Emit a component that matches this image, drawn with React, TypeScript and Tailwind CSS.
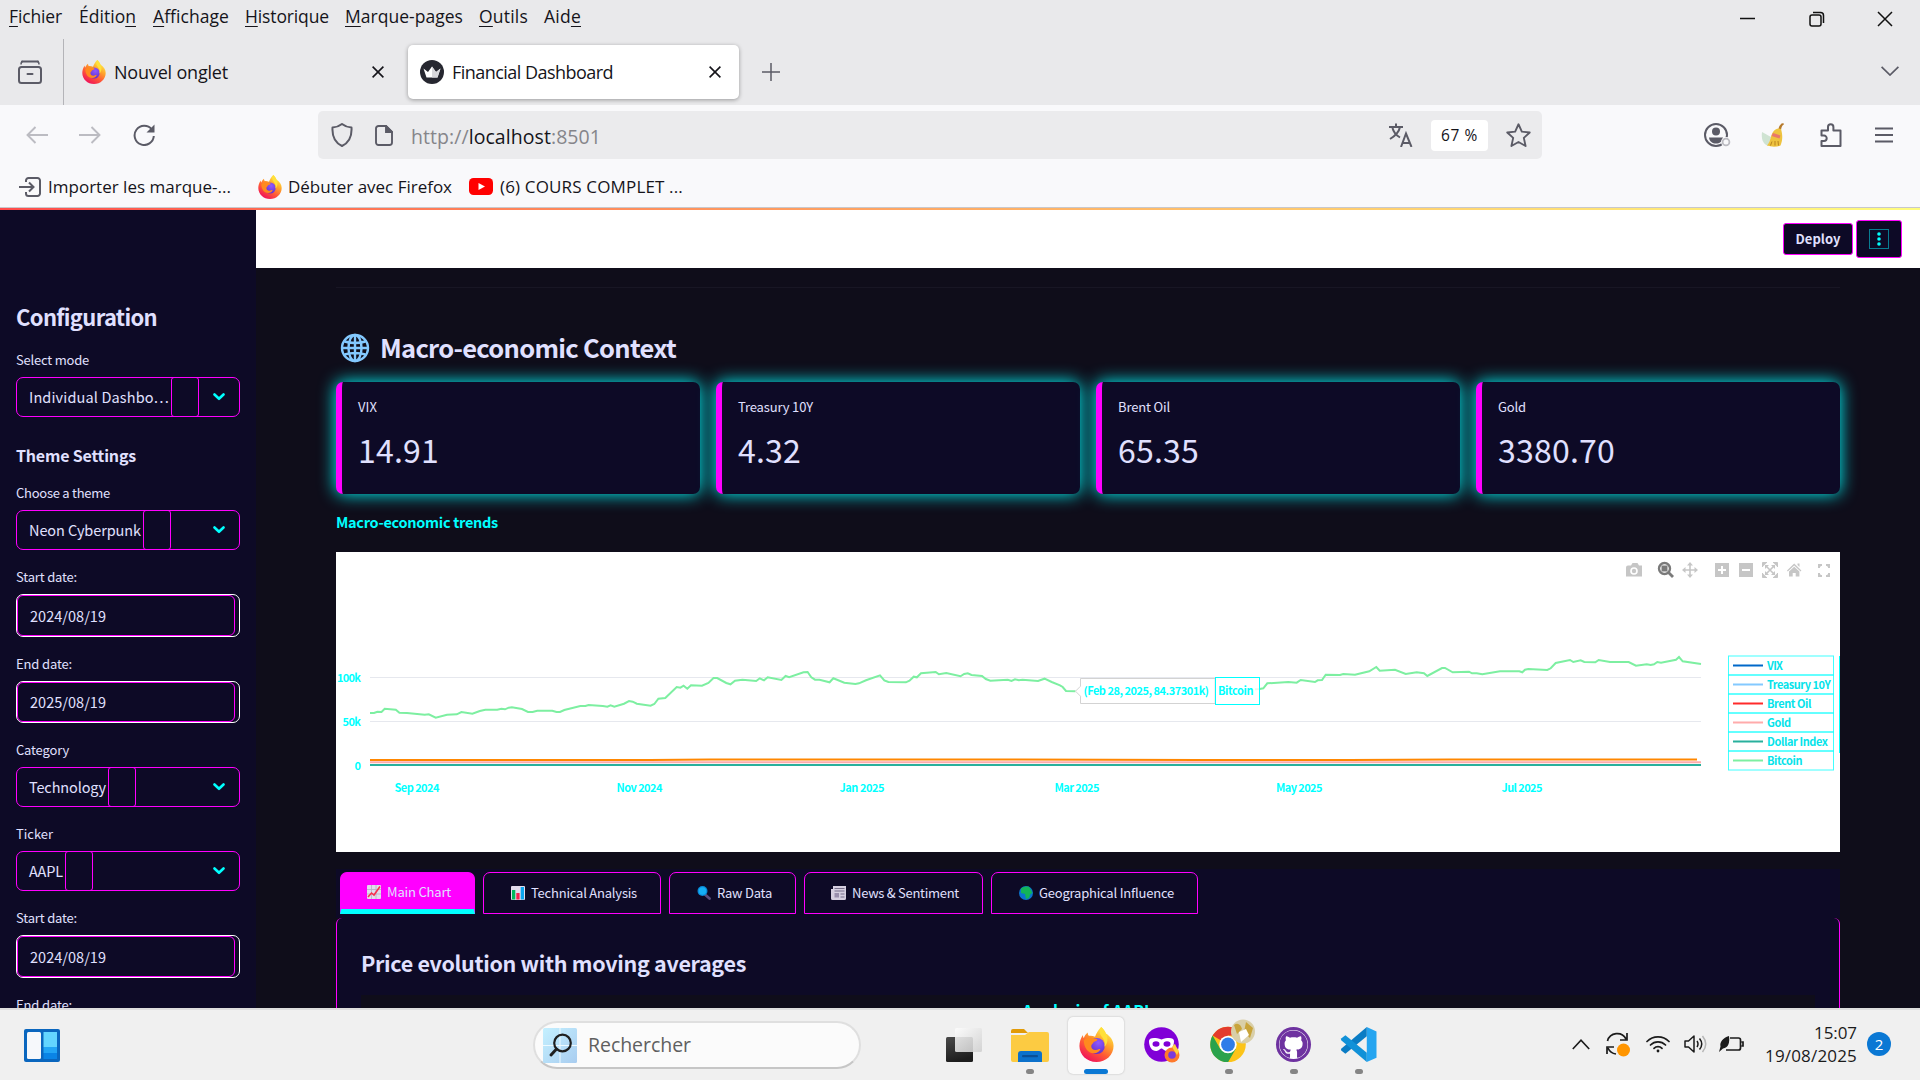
import { useLayoutEffect, useRef, type ReactNode } from "react";
import { FaGithub } from "react-icons/fa";

/* Text whose tracking is adjusted so it fills the width of its box. */
function T({ c = "", children }: { c?: string; children: ReactNode }) {
  const box = useRef<HTMLDivElement>(null);
  const run = useRef<HTMLSpanElement>(null);
  useLayoutEffect(() => {
    if (!box.current || !run.current) return;
    run.current.style.letterSpacing = "0px";
    const n = (run.current.textContent || "").length || 1;
    const d = box.current.getBoundingClientRect().width - run.current.getBoundingClientRect().width;
    run.current.style.letterSpacing = `${(d / n).toFixed(3)}px`;
  }, []);
  return (
    <div ref={box} className={`shrink-0 whitespace-nowrap ${c}`}>
      <span ref={run} className="inline-block">{children}</span>
    </div>
  );
}

function Firefox({ c }: { c: string }) {
  return (
    <svg viewBox="0 0 24 24" className={`shrink-0 ${c}`}>
      <defs>
        <linearGradient id="fx1" x1="0.8" y1="0.05" x2="0.25" y2="0.95">
          <stop offset="0" stopColor="#fff44f" />
          <stop offset="0.35" stopColor="#ffa62b" />
          <stop offset="0.65" stopColor="#ff5a36" />
          <stop offset="1" stopColor="#f0145a" />
        </linearGradient>
        <radialGradient id="fx2" cx="0.6" cy="0.3" r="0.8">
          <stop offset="0" stopColor="#9059ff" />
          <stop offset="1" stopColor="#5b2bc4" />
        </radialGradient>
      </defs>
      <path d="M15.2 0c1.6 1.4 2.7 2.900 3.200 4.400 3.200 1.900 5.300 5 5.300 8.600C23.700 19.200 18.500 24 12 24S.3 19.200.3 13c0-2.900 1-5.500 2.300-7.600.1 1 .3 1.600.7 2.200.5-1.600 1.400-2.800 2.700-3.800 0 1 .2 1.700.7 2.200 1.600-.2 3 0 4.300.7.900-2.300 2.200-4.600 4.200-6.700z" fill="url(#fx1)" />
      <circle cx="12.200" cy="13" r="5.500" fill="url(#fx2)" />
      <path d="M3.300 9.200c2.200-2 4.700-2.500 7-1.400l2.200.4c.3.900-.6 1.500-2.400 2-.5 1.300-1.700 1.500-1.700 3 0 1.700 1.500 2.700 3.300 2.500 1.300-.2 2-.9 3-.6-.6 1.900-2.500 3-4.700 2.900-3.800-.1-6.700-4-6.700-8.800z" fill="#ff8a1e" />
      <path d="M15.200 0c-1.700 2.900-1 5 .8 7.200 1.500 1.900 2 4 1.400 6.300 2.500-2.300 2.800-6.200 1-9.100C17.900 2.900 16.800 1.400 15.200 0z" fill="#ffe03a" />
    </svg>
  );
}

const menus: [string, string, string, string][] = [
  ["", "F", "ichier", "ml-[8px] w-[53px]"],
  ["Éditio", "n", "", "ml-[17px] w-[57px]"],
  ["", "A", "ffichage", "ml-[17px] w-[76px]"],
  ["", "H", "istorique", "ml-[16px] w-[84px]"],
  ["", "M", "arque-pages", "ml-[16px] w-[118px]"],
  ["", "O", "utils", "ml-[16px] w-[49px]"],
  ["Aid", "e", "", "ml-[16px] w-[37px]"],
];

function Cross({ c }: { c: string }) {
  return (
    <svg viewBox="0 0 12 12" className={`shrink-0 stroke-[#15141a] ${c}`} fill="none" strokeWidth="1.600">
      <path d="M.6.6l10.800 10.800M11.400.6L.6 11.400" />
    </svg>
  );
}

function Chrome() {
  return (
    <div className="font-['Open_Sans','Noto_Sans',sans-serif] text-[#15141a]">
      <div className="flex h-[33px] items-start bg-[#e9e9eb] pl-px text-[17.500px]">
        {menus.map(([a, u, b, c]) => (
          <T key={a + u} c={`h-[33px] leading-[32px] ${c}`}>
            {a}<span className="underline decoration-1 underline-offset-[3px]">{u}</span>{b}
          </T>
        ))}
        <div className="ml-auto flex h-[33px] items-center pt-[5px]">
          <svg viewBox="0 0 16 16" className="size-[16px]" stroke="#111" strokeWidth="1.500"><path d="M0 7.500h15" /></svg>
          <svg viewBox="0 0 16 16" className="ml-[53px] size-[16px]" fill="none" stroke="#111" strokeWidth="1.500">
            <rect x="1" y="4" width="11" height="11" rx="2" /><path d="M4 1.500h7.500a3 3 0 0 1 3 3V12" />
          </svg>
          <svg viewBox="0 0 16 16" className="mr-[27px] ml-[52px] size-[16px]" stroke="#111" strokeWidth="1.500"><path d="M1 1l14 14M15 1L1 15" /></svg>
        </div>
      </div>
      <div className="flex h-[72px] items-center bg-[#e9e9eb] pt-[6px] text-[18px]">
        <svg viewBox="0 0 24 24" className="ml-[18px] h-[24px] w-[24px]" fill="none" stroke="#5b5b66" strokeWidth="2">
          <path d="M4 1.500h16M9.500 14h5" strokeLinecap="round" /><path d="M3 4.500c0-2 .500-3 2-3M21 4.500c0-2-.500-3-2-3" strokeWidth="1.500" />
          <rect x="1" y="7" width="22" height="16" rx="2.500" />
        </svg>
        <div className="ml-[21px] h-[66px] w-px self-end bg-[#b4b4b8]" />
        <Firefox c="ml-[18px] size-[24px]" />
        <T c="ml-[8px] w-[114px] leading-[30px]">Nouvel onglet</T>
        <Cross c="ml-[144px] size-[12px]" />
        <div className="ml-[24px] flex h-[54px] w-[331px] items-center rounded-[5px] bg-white shadow-[0_1px_4px_rgba(0,0,0,0.35)]">
          <svg viewBox="0 0 24 24" className="ml-[12px] size-[24px]">
            <circle cx="12" cy="12" r="12" fill="#262730" />
            <path d="M3.500 8.500l4.500 3.500 4-5.500 4 5.500 4.500-3.500-3 9h-11z" fill="#fff" />
            <path d="M12 6.500l4 5.500 4.500-3.500-3 9H12z" fill="#d8d8dc" />
          </svg>
          <T c="ml-[8px] w-[161px] leading-[30px]">Financial Dashboard</T>
          <Cross c="ml-[96px] size-[12px]" />
        </div>
        <svg viewBox="0 0 18 18" className="ml-[23px] size-[18px]" stroke="#5b5b66" strokeWidth="1.500"><path d="M9 0v18M0 9h18" /></svg>
        <svg viewBox="0 0 18 10" className="mr-[21px] mb-[3px] ml-auto h-[10px] w-[18px]" fill="none" stroke="#5b5b66" strokeWidth="1.700"><path d="M.6.8L9 9 17.400.8" /></svg>
      </div>
      <div className="flex h-[60px] items-center bg-[#f9f9fb]">
        <svg viewBox="0 0 22 18" className="ml-[26px] h-[18px] w-[22px]" fill="none" stroke="#bcbcc2" strokeWidth="1.900"><path d="M22 9H1.500M9.500 1l-8 8 8 8" /></svg>
        <svg viewBox="0 0 22 18" className="ml-[31px] h-[18px] w-[22px]" fill="none" stroke="#bcbcc2" strokeWidth="1.900"><path d="M0 9h20.500M12.500 1l8 8-8 8" /></svg>
        <svg viewBox="0 0 22 22" className="ml-[32px] size-[22px]" fill="none" stroke="#5b5b66" strokeWidth="2"><path d="M18.800 5.500A9.600 9.600 0 1 0 20.800 12" /><path d="M21.500.5V8.500H13.500z" fill="#5b5b66" stroke="none" /></svg>
        <div className="ml-[163px] flex h-[48px] w-[1224px] items-center rounded-[5px] bg-[#ebebed]">
          <svg viewBox="0 0 22 24" className="ml-[13px] h-[24px] w-[22px]" fill="none" stroke="#5b5b66" strokeWidth="2" strokeLinejoin="round"><path d="M11 1c2.500 2 5.500 3.200 9.500 3.600C21 13 18.500 19.500 11 23 3.500 19.500 1 13 1.500 4.600 5.500 4.200 8.500 3 11 1z" /></svg>
          <svg viewBox="0 0 18 21" className="ml-[22px] h-[21px] w-[18px]" fill="none" stroke="#5b5b66" strokeWidth="1.900"><path d="M11 1H3.500A2.500 2.500 0 0 0 1 3.500v14A2.500 2.500 0 0 0 3.500 20h11a2.500 2.500 0 0 0 2.500-2.500V7z" /><path d="M11 1v6h6z" fill="#5b5b66" /></svg>
          <T c="mt-[3px] ml-[18px] w-[190px] text-[19.500px] leading-[30px] text-[#85858a]">http://<span className="text-[#15141a]">localhost</span>:8501</T>
          <svg viewBox="0 0 24 24" className="ml-auto h-[24px] w-[24px]" fill="none" stroke="#5b5b66" strokeWidth="2">
            <path d="M0 4h14M7 .5V4M11 4C10 9 6 13 1 16M3.500 5c1 4 4 7.500 7.500 9.500M12 24l5-13.500 5.500 13.500M13.500 20h7" />
          </svg>
          <div className="ml-[18px] flex h-[31px] w-[57px] items-center justify-center rounded-[4px] bg-white">
            <T c="w-[37px] text-[15.500px] leading-[30px]">67 %</T>
          </div>
          <svg viewBox="0 0 24 24" className="mr-[11px] ml-[18px] size-[25px]" fill="none" stroke="#5b5b66" strokeWidth="1.800" strokeLinejoin="round"><path d="M12 1.200l3.200 7.100 7.600.8-5.700 5.200 1.700 7.800L12 18.200 5.200 22.100l1.700-7.800L1.200 9.100l7.600-.8z" /></svg>
        </div>
        <svg viewBox="0 0 28 26" className="ml-[161px] h-[26px] w-[28px]">
          <circle cx="13" cy="13" r="11" fill="none" stroke="#5b5b66" strokeWidth="2" />
          <circle cx="13" cy="9.500" r="4" fill="#5b5b66" /><path d="M6 15.500h14c-.500 4-3.500 6-7 6s-6.500-2-7-6z" fill="#5b5b66" />
          <circle cx="23" cy="20" r="5" fill="#f9f9fb" /><circle cx="23" cy="20" r="3.400" fill="#f9f9fb" stroke="#bcbcc2" strokeWidth="1.800" />
        </svg>
        <svg viewBox="0 0 24 24" className="ml-[30px] size-[24px]">
          <path d="M1 9c-1 7 1 12 6 14l3-9z" fill="#cfe3d2" />
          <path d="M20.500.5q2.500-1 2.500.8c-2 1.200-2.500 3-3 5.700l-2.500-1q.5-3.500 3-5.500z" fill="#b67a2c" />
          <path d="M12 9c2-3 5-4.500 8-3 1.500 5 2 11-.5 16.500-4 1.500-9 1.500-13.500 0C9.500 19 9.500 13 12 9z" fill="#eec33f" />
          <path d="M12 10l7.500 2.500-1 3-8-2.500z" fill="#e9786b" />
          <path d="M9.500 22.500l1.500-4M14 22.500V18M17.500 22.500L17 18" stroke="#b98320" />
        </svg>
        <svg viewBox="0 0 22 24" className="ml-[35px] h-[24px] w-[22px]" fill="none" stroke="#5b5b66" strokeWidth="2" strokeLinejoin="round"><path d="M1.500 7.500H8V4a2.700 2.700 0 0 1 5.400 0v3.500H20.500V23H1.500v-5H4a2.700 2.700 0 0 0 0-5.400H1.500z" /></svg>
        <svg viewBox="0 0 18 16" className="ml-[33px] h-[16px] w-[18px]" stroke="#5b5b66" strokeWidth="2"><path d="M0 1.500h18M0 8h18M0 14.500h18" /></svg>
      </div>
      <div className="flex h-[42px] items-center bg-[#f9f9fb] pt-px text-[17px] leading-[30px]">
        <svg viewBox="0 0 22 20" className="ml-[19px] h-[20px] w-[22px]" fill="none" stroke="#5b5b66" strokeWidth="2"><path d="M7 5V3.500A2.500 2.500 0 0 1 9.500 1h9A2.500 2.500 0 0 1 21 3.500v13a2.500 2.500 0 0 1-2.500 2.500h-9A2.500 2.500 0 0 1 7 16.500V15M0 10h14M10 5.500l4.500 4.500-4.500 4.500" /></svg>
        <T c="ml-[7px] w-[183px]">Importer les marque-...</T>
        <Firefox c="ml-[27px] size-[24px]" />
        <T c="ml-[6px] w-[164px]">Débuter avec Firefox</T>
        <svg viewBox="0 0 24 17" className="ml-[17px] h-[17px] w-[24px]"><rect width="24" height="17" rx="4.500" fill="#f00" /><path d="M9.500 5v7l6.500-3.500z" fill="#fff" /></svg>
        <T c="ml-[7px] w-[183px]">(6) COURS COMPLET ...</T>
      </div>
      <div className="h-px bg-[#c8c8cc]" />
      <div className="h-[2px] bg-linear-to-r from-[#ff4b4b] to-[#fffd80]" />
    </div>
  );
}

function Label({ c, children }: { c: string; children: ReactNode }) {
  return <T c={`h-[20px] pt-px text-[13px] leading-[20px] ${c}`}>{children}</T>;
}

function Select({ c, children }: { c: string; children: ReactNode }) {
  return (
    <div className="mt-[8px] flex h-[40px] w-[224px] items-center rounded-[7px] border border-[#ff00ff] pl-[12px]">
      <T c={`text-[14.500px] leading-[38px] ${c}`}>{children}</T>
      <div className="ml-[2px] h-[40px] w-[28px] shrink-0 rounded-[3px] border border-[#ff00ff]" />
      <svg viewBox="0 0 12 8" className="mr-[14px] ml-auto h-[8px] w-[12px] shrink-0" fill="none" stroke="#0ff" strokeWidth="2.600" strokeLinecap="round" strokeLinejoin="round"><path d="M1.500 1.500L6 5.800l4.500-4.300" /></svg>
    </div>
  );
}

function DateBox({ h, children }: { h: string; children: ReactNode }) {
  return (
    <div className={`mt-[8px] w-[224px] rounded-[7px] border border-white pr-[4px] ${h}`}>
      <div className="flex h-full items-center rounded-[6px] border border-[#ff00ff] pl-[12px]">
        <T c="w-[76px] text-[14.500px] leading-[38px]">{children}</T>
      </div>
    </div>
  );
}

function Sidebar() {
  return (
    <aside className="h-[798px] w-[256px] shrink-0 overflow-hidden bg-[#0d0a26] pt-[91px] pl-[16px]">
      <T c="w-[141px] text-[22px] leading-[30px] font-semibold">Configuration</T>
      <Label c="mt-[18px] w-[73px]">Select mode</Label>
      <Select c="w-[140px]">Individual Dashbo…</Select>
      <T c="mt-[28px] w-[120px] text-[16px] leading-[20px] font-semibold">Theme Settings</T>
      <Label c="mt-[17px] w-[94px]">Choose a theme</Label>
      <Select c="w-[112px]">Neon Cyberpunk</Select>
      <Label c="mt-[16px] w-[61px]">Start date:</Label>
      <DateBox h="h-[43px]">2024/08/19</DateBox>
      <Label c="mt-[16px] w-[56px]">End date:</Label>
      <DateBox h="h-[42px]">2025/08/19</DateBox>
      <Label c="mt-[16px] w-[53px]">Category</Label>
      <Select c="w-[77px]">Technology</Select>
      <Label c="mt-[16px] w-[37px]">Ticker</Label>
      <Select c="w-[34px]">AAPL</Select>
      <Label c="mt-[16px] w-[61px]">Start date:</Label>
      <DateBox h="h-[43px]">2024/08/19</DateBox>
      <Label c="mt-[16px] w-[56px]">End date:</Label>
    </aside>
  );
}

const cards: [string, string, string, string][] = [
  ["VIX", "14.91", "w-[19px]", "w-[81px]"],
  ["Treasury 10Y", "4.32", "w-[75px]", "w-[63px]"],
  ["Brent Oil", "65.35", "w-[52px]", "w-[81px]"],
  ["Gold", "3380.70", "w-[28px]", "w-[117px]"],
];

const btcA = "370,713 374,713 377.4,711.7 381.5,712 384.7,708.7 395.8,709.7 399.4,712.7 407,712.9 424.7,714.7 428.8,714.3 435.7,717.7 447,714.7 456.8,714.3 461.4,712 472.4,713.7 479.8,711 485.3,709.7 497.2,709.7 501.4,708.7 505,709.3 508.7,707.7 511.9,707.3 522,709 528,712 532.6,712 537.2,710.7 552.3,710.7 556.5,712 560,712 564.3,710 580.3,706 585.4,706 588.6,705 602.8,706 607.4,706.7 610.6,705.3 614.3,706.7 624,703.7 629,701 632.7,701.7 636.8,703.7 650.6,705.7 654.3,704 658.4,698.7 665.3,698 676.7,687 680.4,687.7 683.6,685.7 687.3,688.7 691,685.3 702,685.7 708.4,683 713.5,678 717.2,678 726.3,683 730.5,684.3 735,680.7 742.4,679.7 756.2,681 759.8,678.3 764,680.3 767.7,677.3 781.4,680 785.6,676 789.2,677.3 803.5,672.3 807.6,672 811.3,677.3 815,679.7 819.5,679.7 829.6,682.3 833.3,678.3 844.3,682.7 855.4,684 859,683.3 866,680.3 880,675.3 884.3,680.3 888.4,682 905.9,682.3 909.5,680.7 913.7,676.7 916.9,677.3 921,673.3 935.7,672 938.9,674.3 946.3,673 960.5,676.3 964.2,674 967.8,673.3 971.5,675 982,676 985.8,679 990.3,680.7 1007.8,679.7 1011.5,681 1015,679.3 1018.8,680.3 1022.5,679.7 1038,681 1044.5,678.7 1051.7,682 1060,685.3 1062.7,687 1066,691 1075.5,691.3";
const btcB = "1255,689.3 1259.7,689 1263.3,688.3 1267.3,683.3 1288.3,682 1296.7,682.7 1300.7,680 1315,682 1317.7,680.3 1322,680 1325.7,674.7 1340,675 1343.3,674 1355,674.7 1369.3,671.3 1376.3,667 1379.7,670.7 1395,669.7 1405.7,674 1416.7,672.3 1424,673.3 1427.3,676 1442,668 1445,668 1452.7,672.3 1469,671.7 1472,673.3 1476.7,673.3 1482.3,674.3 1500,671.3 1519.3,671.3 1522.3,672.3 1525,669.7 1528.3,669 1547.3,670 1550.7,668.3 1555.7,663 1570,660 1573.3,662 1580.7,660.3 1584.3,662 1595.3,662.3 1598.7,660 1610,662 1628.7,662 1636,665.7 1646.7,664.3 1650.7,665 1654,664.3 1657.3,662 1661,662.7 1676,659.7 1679,657 1682.7,661.3 1701,664";

const months: [number, number, string][] = [
  [394.500, 45, "Sep 2024"], [616.500, 46, "Nov 2024"], [839.500, 45, "Jan 2025"],
  [1054.500, 45, "Mar 2025"], [1276, 46.500, "May 2025"], [1501.500, 41, "Jul 2025"],
];
const legend: [string, string, number][] = [
  ["VIX", "#0068c9", 16], ["Treasury 10Y", "#83c9ff", 64], ["Brent Oil", "#ff2b2b", 44.500],
  ["Gold", "#ffabab", 24], ["Dollar Index", "#29b09d", 61], ["Bitcoin", "#7defa1", 35.500],
];

function TrendChart() {
  return (
    <svg viewBox="336 552 1504 300" className="mt-[19px] h-[300px] w-[1504px] bg-white text-[11px] font-semibold" fill="none">
      <path d="M370 677.500h1331M370 721.500h1331" stroke="#e6e8ee" />
      <path d="M370 762.300h1331" stroke="#ffabab" strokeWidth="2" />
      <path d="M370 760h280l60-.5h300l190 .6h150l100-.7h247" stroke="#ff8700" strokeWidth="2" />
      <path d="M370 765h1331" stroke="#29b09d" strokeWidth="2" />
      <polyline points={btcA} stroke="#7defa1" strokeWidth="2" />
      <polyline points={btcB} stroke="#7defa1" strokeWidth="2" />
      <g fill="#0ff">
        <text x="337" y="682" textLength="24">100k</text>
        <text x="342.500" y="726" textLength="18.500">50k</text>
        <text x="354.500" y="769.500">0</text>
        {months.map(([x, w, t]) => <text key={t} x={x} y="792" textLength={w}>{t}</text>)}
      </g>
      <path d="M1075.500 691.200l5-5V678.500h134.700v25h-134.700v-7.300z" fill="#fff" stroke="#d3d3d3" />
      <rect x="1215.500" y="677.500" width="44" height="27" stroke="#0ff" fill="#fff" fillOpacity="0.8" />
      <text x="1083.500" y="695" textLength="125.500" fill="#0ff">(Feb 28, 2025, 84.37301k)</text>
      <text x="1218" y="695" textLength="35.500" fill="#0ff">Bitcoin</text>
      {legend.map(([t, col, w], i) => (
        <g key={t}>
          <rect x="1728.500" y={656 + i * 19} width="105" height="19" stroke="#0ff" strokeOpacity="0.75" />
          <path d={`M1733 ${665.5 + i * 19}h30`} stroke={col} strokeWidth="2" />
          <text x="1767" y={670 + i * 19} textLength={w} fill="#06e3ea">{t}</text>
        </g>
      ))}
      <path d="M1839.500 656v97" stroke="#0ff" />
      <g fill="#c6c6c6">
        <path d="M1628 565.500h3l1.500-2.500h5l1.500 2.500h3v11h-16v-9q0-2 2-2z" />
        <circle cx="1634" cy="571" r="3.800" fill="#fff" /><circle cx="1634" cy="571" r="2.200" />
        <circle cx="1664.500" cy="568.500" r="5.500" fill="#fff" stroke="#7a7a7a" strokeWidth="2.400" />
        <path d="M1668.500 572.500l4.500 4.500" stroke="#7a7a7a" strokeWidth="2.800" /><rect x="1662" y="566" width="5" height="5" fill="#7a7a7a" stroke="#7a7a7a" strokeWidth="1" />
        <path d="M1690 564v12M1684 570h12" stroke="#c6c6c6" strokeWidth="1.600" />
        <path d="M1690 562l3 3.500h-6zM1690 578l3-3.500h-6zM1682 570l3.500-3v6zM1698 570l-3.500-3v6z" />
        <path d="M1715 563h14v14h-14zM1739 563h14v14h-14z" />
        <path d="M1722 566v8M1718 570h8M1742 570h8" stroke="#fff" strokeWidth="2" />
        <path d="M1762.500 567v-4.500h4.500M1773 562.500h4.500v4.500M1777.500 573v4.500h-4.500M1767 577.500h-4.500v-4.500" stroke="#c6c6c6" />
        <path d="M1766.500 566.500l7 7M1773.500 566.500l-7 7" stroke="#c6c6c6" strokeWidth="1.600" />
        <path d="M1765 565h4l-4 4zM1775 565v4l-4-4zM1775 575h-4l4-4zM1765 575v-4l4 4z" />
        <path d="M1787 570.500l7.200-7 7.200 7-.8.900-6.400-6-6.400 6zM1789 571.500l5.200-4.800 5.200 4.800v5h-3.700v-3.500h-3v3.500h-3.700zM1797.500 563.500h2v3.500l-2-2z" />
        <path d="M1819 568v-3h3M1826 565h3v3M1829 573v3h-3M1822 576h-3v-3" stroke="#c6c6c6" strokeWidth="2" />
      </g>
    </svg>
  );
}

const tabIcons: ReactNode[] = [
  <svg viewBox="0 0 14 14" className="size-[14px]"><rect width="14" height="14" rx="1" fill="#e2dcec" /><path d="M4.500 0v14M9 0v14M0 4.500h14M0 9h14" stroke="#b5aec4" strokeWidth=".8" /><path d="M1 12l3.500-4 2.500 2 6-8.500" stroke="#f8314f" strokeWidth="1.600" fill="none" /></svg>,
  <svg viewBox="0 0 14 14" className="size-[14px]"><rect width="14" height="14" rx="1" fill="#e2dcec" /><rect x="1" y="4" width="3.300" height="9.500" fill="#00b85c" /><rect x="5.300" y="7" width="3.300" height="6.500" fill="#f8214f" /><rect x="9.700" y="1" width="3.300" height="12.500" fill="#0aa5ee" /></svg>,
  <svg viewBox="0 0 14 14" className="size-[14px]"><path d="M8 8.500l4.500 4" stroke="#5a4d7c" strokeWidth="2.800" strokeLinecap="round" /><circle cx="5.500" cy="5" r="5" fill="#0a8ad8" /><circle cx="5.500" cy="5" r="3.700" fill="#15aef5" /></svg>,
  <svg viewBox="0 0 15 14" className="h-[14px] w-[15px]"><path d="M2 0h13v12.500q0 1.500-1.500 1.500H1.500Q0 14 0 12.500V3h2z" fill="#d5cfe0" /><path d="M3.500 2.500h10M3.500 5h10M9.500 8h4M9.500 11h4" stroke="#766f8a" strokeWidth="1.200" /><rect x="3.500" y="7" width="4.500" height="4.500" fill="#998fad" /></svg>,
  <svg viewBox="0 0 14 14" className="size-[14px]"><circle cx="7" cy="7" r="7" fill="#0a74cf" /><path d="M2 2.500C4 .5 8 0 10 .8L12 4l1.500 3-2 1L10 12l-3 1-1-5-4-1z" fill="#12b45a" /></svg>,
];
const tabs: [string, string, string, string][] = [
  ["Main Chart", "w-[135px]", "pl-[26px]", "w-[64px]"],
  ["Technical Analysis", "w-[178px]", "pl-[27px]", "w-[106px]"],
  ["Raw Data", "w-[127px]", "pl-[27px]", "w-[55px]"],
  ["News & Sentiment", "w-[179px]", "pl-[26px]", "w-[107px]"],
  ["Geographical Influence", "w-[207px]", "pl-[27px]", "w-[135px]"],
];

function Main() {
  return (
    <main className="h-[798px] grow overflow-hidden bg-[#0f0d1a]">
      <header className="flex h-[58px] items-center justify-end bg-white pr-[18px] pb-px">
        <div className="flex h-[32px] w-[70px] items-center justify-center rounded-[3px] border border-[#ff00ff] bg-[#0d0a26]">
          <T c="w-[45px] text-[13px] leading-[30px] font-bold">Deploy</T>
        </div>
        <div className="ml-[3px] flex h-[38px] w-[46px] items-center justify-center rounded-[3px] border border-[#ff00ff] bg-[#0d0a26]">
          <svg viewBox="0 0 20 20" className="size-[20px] border border-[#087c92]" fill="#0ff"><circle cx="10" cy="4.500" r="2" /><circle cx="10" cy="10" r="2" /><circle cx="10" cy="15.500" r="2" /></svg>
        </div>
      </header>
      <div className="ml-[80px] w-[1504px]">
        <div className="h-[20px] border-b border-[#181624]" />
        <div className="mt-[41px] flex h-[38px] items-center">
          <svg viewBox="0 0 30 30" className="ml-[4px] size-[30px]" fill="none" stroke="#83c9ff" strokeWidth="2.400">
            <circle cx="15" cy="15" r="13" /><ellipse cx="15" cy="15" rx="6.500" ry="13" /><path d="M15 2v26M2 15h26M4.500 8.500q10.500 3 21 0M4.500 21.500q10.500-3 21 0" />
          </svg>
          <T c="-mt-[2px] ml-[10px] w-[296px] text-[25.500px] leading-[38px] font-semibold">Macro-economic Context</T>
        </div>
        <div className="mt-[15px] flex gap-[16px]">
          {cards.map(([l, v, lw, vw]) => (
            <div key={l} className="h-[112px] w-[364px] rounded-[7px] border-l-[6px] border-[#ff00ff] bg-[#0d0a26] pt-[15px] pl-[16px] shadow-[0_0_17px_#00ffff]">
              <T c={`text-[13px] leading-[20px] ${lw}`}>{l}</T>
              <T c={`mt-[10px] text-[32px] leading-[44px] ${vw}`}>{v}</T>
            </div>
          ))}
        </div>
        <T c="mt-[17px] w-[162px] text-[14.500px] leading-[22px] font-bold text-[#0ff]">Macro-economic trends</T>
        <TrendChart />
        <div className="mt-[17px] flex h-[49px] gap-[8px] bg-[#0d0a26] pt-[3px] pl-[4px]">
          {tabs.map(([t, w, p, tw], i) => (
            <div key={t} className={`flex h-[42px] items-center gap-[6px] rounded-t-[7px] border border-[#ff00ff] ${w} ${p} ${i === 0 ? "border-b-[5px] border-b-[#00ffff] bg-[#ff00ff] pt-px" : ""}`}>
              {tabIcons[i]}
              <T c={`text-[13px] leading-[20px] ${tw}`}>{t}</T>
            </div>
          ))}
        </div>
        <div className="h-[120px] rounded-t-[6px] border border-t-0 border-[#ff00ff] bg-[#0d0a26] px-[24px] pt-[29px]">
          <T c="w-[385px] text-[21.500px] leading-[32px] font-semibold">Price evolution with moving averages</T>
          <div className="mt-[16px] h-[60px] bg-[#0f0d1a] pt-[3px]">
            <T c="mx-auto w-[131px] text-[16px] leading-[24px] font-bold text-[#0ff]">Analysis of AAPL</T>
          </div>
        </div>
      </div>
    </main>
  );
}

function Dot() {
  return <div className="mt-[7px] h-[5px] w-[8px] rounded-full bg-[#858585]" />;
}

function Taskbar() {
  return (
    <footer className="flex h-[72px] border-t-2 border-[#dedede] bg-[#f0f0f0] font-['Open_Sans','Noto_Sans',sans-serif] text-[#1b1b1b]">
      <svg viewBox="0 0 36 33" className="mt-[19px] ml-[24px] h-[33px] w-[36px]">
        <rect width="36" height="33" rx="2" fill="#0a66be" /><rect x="3" y="3" width="14" height="27" rx="1.500" fill="#f6f8fb" />
        <rect x="19.500" y="3" width="13.500" height="15" fill="#63d5ff" /><rect x="19.500" y="18" width="13.500" height="6" fill="#22a5f5" /><rect x="19.500" y="24" width="13.500" height="6" fill="#0a84e6" />
      </svg>
      <div className="mt-[11px] ml-[473px] flex h-[48px] w-[328px] items-center rounded-full border-2 border-[#dfdfdf] border-b-[#c6c6c6] bg-[#fbfbfb] pl-[8px]">
        <svg viewBox="0 0 34 35" className="h-[35px] w-[34px]">
          <defs><linearGradient id="tile" x2="1" y2="1"><stop stopColor="#c4f0ff" /><stop offset="1" stopColor="#a9cdf0" /></linearGradient></defs>
          <rect width="34" height="35" rx="1.500" fill="url(#tile)" /><path d="M17 0v35M0 17.500h34" stroke="#eefaff" />
          <circle cx="19.500" cy="15" r="8.300" fill="none" stroke="#1f1f1f" strokeWidth="2.200" /><path d="M13.500 21L8 27" stroke="#1f1f1f" strokeWidth="3" strokeLinecap="round" />
        </svg>
        <T c="ml-[11px] w-[103px] text-[19.500px] leading-[30px] text-[#5f5f5f]">Rechercher</T>
      </div>
      <svg viewBox="0 0 38 34" className="mt-[18px] ml-[84px] h-[34px] w-[38px]">
        <defs>
          <linearGradient id="tv1" y2="1" x2="0.3"><stop stopColor="#4a4a4a" /><stop offset="1" stopColor="#1d1d1d" /></linearGradient>
          <linearGradient id="tv2" x2="1" y2="1"><stop stopColor="#fdfdfd" /><stop offset="1" stopColor="#cfcfcf" /></linearGradient>
        </defs>
        <rect x="1" y="9" width="27" height="25" rx="1.500" fill="url(#tv1)" /><rect x="10" y="0" width="27" height="24" rx="1.500" fill="url(#tv2)" opacity="0.88" />
      </svg>
      <div className="mt-[19px] ml-[28px] flex w-[38px] flex-col items-center">
        <svg viewBox="0 0 38 33" className="h-[33px] w-[38px]">
          <path d="M0 2q0-2 2-2h11l4 4H0z" fill="#e29b08" /><path d="M0 6h14l4-3h18q2 0 2 2v26q0 2-2 2H2q-2 0-2-2z" fill="#fccb42" />
          <path d="M7 33V25q0-3 3-3h18q3 0 3 3v8z" fill="#0c71cb" /><rect x="11" y="26" width="16" height="2.200" rx="1" fill="#0a4f96" />
        </svg>
        <Dot />
      </div>
      <div className="mt-[7px] ml-[19px] flex h-[57px] w-[56px] flex-col items-center rounded-[5px] bg-[#fafafa] pt-[10px] shadow-[0_0_2px_rgba(0,0,0,0.25)]">
        <Firefox c="size-[35px]" />
        <div className="mt-[7px] h-[5px] w-[24px] rounded-full bg-[#0a78d4]" />
      </div>
      <svg viewBox="0 0 36 36" className="mt-[17px] ml-[20px] size-[36px]">
        <circle cx="17.500" cy="17.500" r="17.300" fill="#8000d7" />
        <path d="M5 14c0-3 5-4 12.500-1.500C25 10 30 11 30 14c0 6-3 10-7 10-3 0-4-2.500-5.500-2.500S15 24 12 24c-4 0-7-4-7-10z" fill="#fff" />
        <ellipse cx="12" cy="17" rx="3.500" ry="2.700" fill="#8000d7" /><ellipse cx="23" cy="17" rx="3.500" ry="2.700" fill="#8000d7" />
        <circle cx="28" cy="28" r="7.500" fill="#ff7a2c" /><path d="M28 20q2-3 3-3 1 3 4 7l-2 4z" fill="#ffd43b" /><circle cx="28" cy="28" r="3.800" fill="#7a3bdc" />
      </svg>
      <div className="mt-[9px] ml-[30px] flex w-[46px] flex-col">
        <svg viewBox="0 0 46 43" className="h-[43px] w-[46px]">
          <g transform="translate(18 25.500)">
            <circle r="17.800" fill="#fcc419" />
            <path d="M0 0L-15.400-8.900A17.800 17.800 0 0 1 15.400-8.900H0z" fill="#e33b2e" />
            <path d="M-15.400-8.900A17.800 17.800 0 0 0 0 17.800L7.700 4.400H-7.700z" fill="#2ba24c" />
            <circle r="8.700" fill="#fff" /><circle r="6.900" fill="#2f7de9" />
          </g>
          <circle cx="33" cy="12.500" r="12" fill="#d9cfa8" /><path d="M24 6c4-3 7 0 8 4l-5 5zM36 3l7 6-3 10-6-6z" fill="#c9a43a" /><path d="M29 13l7-3 3 6-8 7z" fill="#fff" />
        </svg>
        <div className="pl-[15px]"><Dot /></div>
      </div>
      <div className="mt-[17px] ml-[20px] flex w-[35px] flex-col items-center">
        <div className="flex size-[35px] items-center justify-center rounded-full bg-[#6e32a0]"><div className="flex size-[29px] items-center justify-center rounded-full bg-white"><FaGithub className="size-[29px] text-[#6e32a0]" /></div></div>
        <Dot />
      </div>
      <div className="mt-[17px] ml-[29px] flex w-[38px] flex-col items-center">
        <svg viewBox="0 0 38 36" className="h-[35px] w-[38px]">
          <path d="M27 0l10 4.500v27L27 36z" fill="#25a5f0" /><path d="M27 0v9.500L5 27.500 1 24.500q-1.200-1.200 0-2.500z" fill="#0a7cc4" />
          <path d="M27 36v-9.500L5 8.500 1 11.500q-1.200 1.200 0 2.500z" fill="#1191d8" />
        </svg>
        <Dot />
      </div>
      <div className="mt-[21px] mr-[29px] ml-auto flex h-[26px] items-center">
        <svg viewBox="0 0 18 11" className="h-[11px] w-[18px]" fill="none" stroke="#1b1b1b" strokeWidth="1.600"><path d="M.8 10L9 1.200l8.200 8.800" /></svg>
        <svg viewBox="0 0 26 26" className="ml-[15px] size-[26px]" fill="none" stroke="#1b1b1b" strokeWidth="1.700">
          <path d="M2.500 10A10 10 0 0 1 21 8M22 2v7h-7M2 23v-7h7M3 17a10 10 0 0 0 8 6" /><circle cx="18.500" cy="19" r="6.500" fill="#ff9500" stroke="none" />
        </svg>
        <svg viewBox="0 0 24 18" className="ml-[15px] h-[18px] w-[24px]" fill="none" stroke="#1b1b1b" strokeWidth="1.700" strokeLinecap="round">
          <path d="M1 6.500a15.500 15.500 0 0 1 22 0M4.500 10a10.600 10.600 0 0 1 15 0M8 13.300a5.700 5.700 0 0 1 8 0" /><circle cx="12" cy="16" r="1.400" fill="#1b1b1b" stroke="none" />
        </svg>
        <svg viewBox="0 0 24 18" className="ml-[14px] h-[18px] w-[24px]" fill="none" stroke="#1b1b1b" strokeWidth="1.500" strokeLinejoin="round">
          <path d="M1 6h3.500L10 1v16L4.500 12H1zM13 6q2 3 0 6M15.500 3.500q4.500 5.500 0 11" /><path d="M18.500 1q6.500 8 0 16" stroke="#b5b5b5" />
        </svg>
        <svg viewBox="0 0 25 18" className="ml-[11px] h-[18px] w-[25px]" fill="none" stroke="#1b1b1b" strokeWidth="1.700">
          <path d="M11 3h8.500q2 0 2 2v8q0 2-2 2H7M22.500 7H24v4h-1.500" /><path d="M10 1C4 3 .5 7 1.500 11.500L0 17l4-3.500C9 13 11 8 10 1z" fill="#1b1b1b" stroke="none" />
        </svg>
        <div className="-mt-px ml-[21px] flex flex-col items-end text-[17px]">
          <T c="w-[43px] leading-[23px]">15:07</T>
          <T c="w-[92px] leading-[23px]">19/08/2025</T>
        </div>
        <div className="ml-[10px] flex size-[24px] items-center justify-center rounded-full bg-[#0a78d4] text-[15px] text-white">2</div>
      </div>
    </footer>
  );
}

export default function App() {
  return (
    <div className="h-[1080px] w-[1920px] overflow-hidden font-['Noto_Sans_CJK_JP','Noto_Sans_CJK_SC',sans-serif] text-[#e0e0ff]">
      <Chrome />
      <div className="flex h-[798px]">
        <Sidebar />
        <Main />
      </div>
      <Taskbar />
    </div>
  );
}
